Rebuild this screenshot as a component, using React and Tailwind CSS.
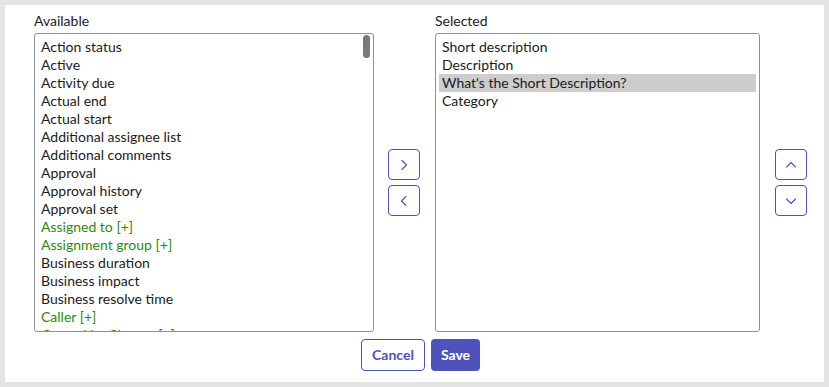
import React, { useState } from "react";

const available = [
  { label: "Action status" },
  { label: "Active" },
  { label: "Activity due" },
  { label: "Actual end" },
  { label: "Actual start" },
  { label: "Additional assignee list" },
  { label: "Additional comments" },
  { label: "Approval" },
  { label: "Approval history" },
  { label: "Approval set" },
  { label: "Assigned to [+]", ref: true },
  { label: "Assignment group [+]", ref: true },
  { label: "Business duration" },
  { label: "Business impact" },
  { label: "Business resolve time" },
  { label: "Caller [+]", ref: true },
  { label: "Caused by Change [+]", ref: true },
  { label: "Category" },
  { label: "Change request [+]", ref: true },
];

const initialSelected = [
  "Short description",
  "Description",
  "What's the Short Description?",
  "Category",
];

const Chevron = ({ dir }) => {
  const paths = {
    right: "M6 3.5 L10.5 8 L6 12.5",
    left: "M10 3.5 L5.5 8 L10 12.5",
    up: "M3.5 10 L8 5.5 L12.5 10",
    down: "M3.5 6 L8 10.5 L12.5 6",
  };
  return (
    <svg width="16" height="16" viewBox="0 0 16 16" fill="none">
      <path d={paths[dir]} stroke="#4f52bd" strokeWidth="1.1" strokeLinecap="round" strokeLinejoin="round" />
    </svg>
  );
};

const IconButton = ({ dir }) => (
  <button className="w-8 h-[31px] flex items-center justify-center rounded-[4px] border border-[#4f52bd] bg-white cursor-pointer">
    <Chevron dir={dir} />
  </button>
);

const App = () => {
  const [selected] = useState(initialSelected);
  const [active, setActive] = useState(2);

  return (
    <div
      className="w-[829px] h-[387px] bg-[#e4e4e4] p-[5px] text-[14px] leading-[18px] text-[#1b1b1b]"
      style={{ fontFamily: "Lato, 'Open Sans', sans-serif" }}
    >
      <div className="w-[819px] h-[377px] bg-white pt-[7px] pl-[29px]">
        <div className="w-[773px]">
          <div className="flex h-[21px]">
            <div className="w-[340px]">Available</div>
            <div className="w-[61px]" />
            <div>Selected</div>
          </div>

          <div className="flex items-center">
            <div className="relative w-[340px] h-[299px] border border-[#8d919c] rounded-[3px] overflow-hidden py-1 pl-[6px]">
              {available.map((item) => (
                <div
                  key={item.label}
                  className={`h-[18px] whitespace-nowrap ${item.ref ? "text-[#2b8a0c]" : ""}`}
                >
                  {item.label}
                </div>
              ))}
              <div className="absolute right-[3px] top-[1px] w-[7px] h-[23px] rounded-full bg-[#7a7a7a]" />
            </div>

            <div className="w-[61px] pl-[14px] flex flex-col gap-[5px]">
              <IconButton dir="right" />
              <IconButton dir="left" />
            </div>

            <div className="w-[325px] h-[299px] border border-[#8d919c] rounded-[3px] overflow-hidden py-1 px-[3px]">
              {selected.map((label, i) => (
                <div
                  key={label}
                  onClick={() => setActive(i)}
                  className={`h-[18px] px-[3px] whitespace-nowrap cursor-default ${i === active ? "bg-[#cdcdcd]" : ""}`}
                >
                  {label}
                </div>
              ))}
            </div>

            <div className="pl-[15px] flex flex-col gap-[5px]">
              <IconButton dir="up" />
              <IconButton dir="down" />
            </div>
          </div>

          <div className="flex justify-center gap-[6px] mt-[7px]">
            <button className="w-16 h-8 rounded-[4px] border border-[#4f52bd] bg-white text-[#4f52bd] font-bold text-[14px] cursor-pointer">
              Cancel
            </button>
            <button className="w-[49px] h-8 rounded-[4px] bg-[#4f52bd] text-white font-bold text-[14px] cursor-pointer">
              Save
            </button>
          </div>
        </div>
      </div>
    </div>
  );
};

export default App;
